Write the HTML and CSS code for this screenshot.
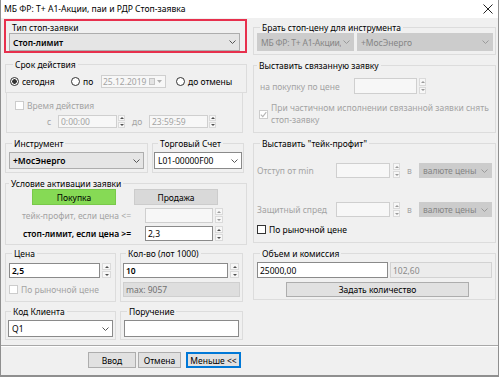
FILE: index.html
```html
<!DOCTYPE html>
<html>
<head>
<meta charset="utf-8">
<link rel="stylesheet" href="styles.css">
</head>
<body>
<div class="window">
  <div class="titlebar">
    <span class="title">МБ ФР: Т+ А1-Акции, паи и РДР Стоп-заявка</span>
    <svg class="close" width="10" height="10" viewBox="0 0 10 10"><path d="M0.5 0.5 L9.5 9.5 M9.5 0.5 L0.5 9.5" stroke="#222" stroke-width="1" fill="none"/></svg>
  </div>
  <div class="content">
    <div class="col left">
      <div class="highlight">
        <div class="hl-label">Тип стоп-заявки</div>
        <div class="combo grey hl-combo"><span class="bold">Стоп-лимит</span><svg class="arrow" width="7" height="4" viewBox="0 0 7 4"><path d="M0.5 0.5 L3.5 3.5 L6.5 0.5" stroke="#555" fill="none"/></svg></div>
      </div>

      <div class="group srok">
        <div class="legend">Срок действия</div>
        <div class="radio-row">
          <span class="opt opt1"><span class="radio on"></span><span class="rtext">сегодня</span></span>
          <span class="opt opt2"><span class="radio"></span><span class="rtext">по</span></span>
          <span class="date"><span class="dis-text">25.12.2019</span><span class="date-icons"><span class="cal"></span><svg width="5" height="3" viewBox="0 0 5 3"><path d="M0 0 L2.5 3 L5 0Z" fill="#b0b0b0"/></svg></span></span>
          <span class="opt opt3"><span class="radio"></span><span class="rtext">до отмены</span></span>
        </div>
      </div>

      <div class="timebox">
        <div class="chk-row"><span class="chk dis"></span><span class="dis-text ctext">Время действия</span></div>
        <div class="time-row">
          <span class="dis-text t-s">с</span>
          <span class="field dis t-in"><span class="dis-text">0:00:00</span></span>
          <span class="spin s7"><span class="sb up"></span><span class="sb down"></span></span>
          <span class="dis-text t-do">до</span>
          <span class="field dis t-in"><span class="dis-text">23:59:59</span></span>
          <span class="spin s7"><span class="sb up"></span><span class="sb down"></span></span>
        </div>
      </div>

      <div class="row2 r-instr">
        <div class="group g-instr">
          <div class="legend">Инструмент</div>
          <div class="combo grey c-instr"><span class="bold">+МосЭнерго</span><svg class="arrow" width="7" height="4" viewBox="0 0 7 4"><path d="M0.5 0.5 L3.5 3.5 L6.5 0.5" stroke="#555" fill="none"/></svg></div>
        </div>
        <div class="group g-acct">
          <div class="legend">Торговый Счет</div>
          <div class="combo white c-acct"><span>L01-00000F00</span><svg class="arrow" width="7" height="4" viewBox="0 0 7 4"><path d="M0.5 0.5 L3.5 3.5 L6.5 0.5" stroke="#555" fill="none"/></svg></div>
        </div>
      </div>

      <div class="group g-cond">
        <div class="legend">Условие активации заявки</div>
        <div class="btn-row">
          <span class="sbtn buy">Покупка</span>
          <span class="sbtn sell">Продажа</span>
        </div>
        <div class="cond-row">
          <span class="cond-label dis-text">тейк-профит, если цена &lt;=</span>
          <span class="field dis c-in"></span>
          <span class="spin s8 dspin"><span class="sb up"></span><span class="sb down"></span></span>
        </div>
        <div class="cond-row">
          <span class="cond-label bold">стоп-лимит, если цена &gt;=</span>
          <span class="field white c-in"><span>2,3</span></span>
          <span class="spin s8"><span class="sb up"></span><span class="sb down"></span></span>
        </div>
      </div>

      <div class="row2 r-price">
        <div class="group g-price">
          <div class="legend">Цена</div>
          <div class="in-row">
            <span class="field white p-in"><span class="bold">2,5</span></span>
            <span class="spin s9"><span class="sb up"></span><span class="sb down"></span></span>
          </div>
          <div class="chk-row p-chk"><span class="chk dis"></span><span class="dis-text ctext">По рыночной цене</span></div>
        </div>
        <div class="group g-qty">
          <div class="legend">Кол-во (лот 1000)</div>
          <div class="in-row">
            <span class="field white q-in"><span class="bold">10</span></span>
            <span class="spin s9"><span class="sb up"></span><span class="sb down"></span></span>
          </div>
          <div class="field ro q-max"><span>max: 9057</span></div>
        </div>
      </div>

      <div class="row2 r-client">
        <div class="group g-client">
          <div class="legend">Код Клиента</div>
          <div class="combo white c-client"><span>Q1</span><svg class="arrow" width="7" height="4" viewBox="0 0 7 4"><path d="M0.5 0.5 L3.5 3.5 L6.5 0.5" stroke="#555" fill="none"/></svg></div>
        </div>
        <div class="group g-order">
          <div class="legend">Поручение</div>
          <div class="field white o-in"></div>
        </div>
      </div>
    </div>

    <div class="col right">
      <div class="group g-take">
        <div class="legend">Брать стоп-цену для инструмента</div>
        <div class="take-row">
          <div class="combo disc t1"><span class="ctxt">МБ ФР: Т+ А1-Акции,</span><svg class="arrow" width="7" height="4" viewBox="0 0 7 4"><path d="M0.5 0.5 L3.5 3.5 L6.5 0.5" stroke="#9a9a9a" fill="none"/></svg></div>
          <div class="combo disc t2"><span class="ctxt">+МосЭнерго</span><svg class="arrow" width="7" height="4" viewBox="0 0 7 4"><path d="M0.5 0.5 L3.5 3.5 L6.5 0.5" stroke="#9a9a9a" fill="none"/></svg></div>
        </div>
      </div>

      <div class="group g-link">
        <div class="legend">Выставить связанную заявку</div>
        <div class="link-row">
          <span class="dis-text link-label">на покупку по цене</span>
          <span class="field dis l-in"></span>
          <span class="spin s7 l-spin dspin"><span class="sb up"></span><span class="sb down"></span></span>
        </div>
        <div class="link-chk">
          <span class="chk dis checked"><svg width="7" height="7" viewBox="0 0 7 7"><path d="M0.8 3.6 L2.8 5.6 L6.3 1.2" stroke="#b5b5b5" stroke-width="1.1" fill="none"/></svg></span>
          <span class="dis-text link-text">При частичном исполнении связанной заявки снять<br>стоп-заявку</span>
        </div>
      </div>

      <div class="group g-tp">
        <div class="legend">Выставить "тейк-профит"</div>
        <div class="tp-row tp1">
          <span class="dis-text tp-label">Отступ от min</span>
          <span class="field dis tp-in"></span>
          <span class="spin s7 tp-spin dspin"><span class="sb up"></span><span class="sb down"></span></span>
          <span class="dis-text tp-v">в</span>
          <div class="combo disc tp-c"><span class="ctxt">валюте цены</span><svg class="arrow" width="7" height="4" viewBox="0 0 7 4"><path d="M0.5 0.5 L3.5 3.5 L6.5 0.5" stroke="#9a9a9a" fill="none"/></svg></div>
        </div>
        <div class="tp-row tp2">
          <span class="dis-text tp-label">Защитный спред</span>
          <span class="field dis tp-in"></span>
          <span class="spin s7 tp-spin dspin"><span class="sb up"></span><span class="sb down"></span></span>
          <span class="dis-text tp-v">в</span>
          <div class="combo disc tp-c"><span class="ctxt">валюте цены</span><svg class="arrow" width="7" height="4" viewBox="0 0 7 4"><path d="M0.5 0.5 L3.5 3.5 L6.5 0.5" stroke="#9a9a9a" fill="none"/></svg></div>
        </div>
        <div class="chk-row tp-chk"><span class="chk"></span><span class="ctext">По рыночной цене</span></div>
      </div>

      <div class="group g-vol">
        <div class="legend">Объем и комиссия</div>
        <div class="vol-row">
          <span class="field white v-in"><span>25000,00</span></span>
          <span class="field ro2 v-fee"><span>102,60</span></span>
        </div>
        <div class="btn v-btn">Задать количество</div>
      </div>
    </div>
  </div>
  <div class="footer">
    <div class="btn f1">Ввод</div>
    <div class="btn f2">Отмена</div>
    <div class="btn f3 focus">Меньше &lt;&lt;</div>
  </div>
</div>
</body>
</html>
```
FILE: styles.css
```css
* { box-sizing: border-box; }
html, body { margin: 0; padding: 0; }
body {
  font-family: "Noto Sans", "Open Sans", sans-serif;
  font-size: 8.5px;
  line-height: 11px;
  color: #000;
  background: #fff;
  width: 500px;
  height: 377px;
  overflow: hidden;
}
.bold { font-weight: 600; }
.dis-text { color: #a3a3a3; }

.window {
  width: 499px;
  height: 377px;
  background: #f0f0f0;
  border-left: 1px solid #8f8f8f;
  border-right: 1px solid #8f8f8f;
  border-bottom: 2px solid #8f8f8f;
  display: flex;
  flex-direction: column;
}
.titlebar {
  height: 18px;
  flex: none;
  background: #fff;
  display: flex;
  align-items: center;
  justify-content: space-between;
  padding: 0 5px 0 3px;
}
.title { font-size: 8.6px; }
.content {
  flex: 1;
  display: flex;
  padding-left: 3px;
}
.col { display: flex; flex-direction: column; width: 243px; }
.col.right { margin-left: 6px; }

/* generic group box */
.group { border: 1px solid #dcdcdc; }
.legend {
  width: max-content;
  height: 11px;
  line-height: 11px;
  margin: -6px 0 0 3px;
  padding: 0 2px;
  background: #f0f0f0;
}

/* controls */
.combo {
  display: flex;
  align-items: center;
  justify-content: space-between;
  padding: 0 3px 0 3px;
  border: 1px solid #adadad;
  white-space: nowrap;
  overflow: hidden;
}
.ctxt { overflow: hidden; min-width: 0; flex: 0 1 auto; }
.combo.grey { background: #e5e5e5; border-color: #adadad; }
.combo.white { background: #fff; border-color: #8a8a8a; }
.combo.disc { background: #cccccc; border-color: #cccccc; color: #858585; }
.arrow { flex: none; margin-left: 2px; }

.field {
  display: flex;
  align-items: center;
  padding: 0 2px;
  border: 1px solid #8a8a8a;
  background: #fff;
  white-space: nowrap;
}
.field.white { background: #fff; border-color: #8a8a8a; }
.field.dis { background: #f7f7f7; border-color: #cfcfcf; }
.field.ro { background: #dedede; border-color: #cfcfcf; color: #707070; }
.field.ro2 { background: #ececec; border-color: #d2d2d2; color: #8a8a8a; }

.spin { display: flex; flex-direction: column; justify-content: space-between; flex: none; }
.sb {
  flex: 1;
  display: flex;
  align-items: center;
  justify-content: center;
  background: #f7f7f7;
  border: 1px solid #dadada;
}
.sb + .sb { margin-top: 1px; }
.sb::after {
  content: "";
  width: 0;
  height: 0;
  border-left: 2px solid transparent;
  border-right: 2px solid transparent;
}
.sb.up::after { border-bottom: 2px solid #505050; }
.sb.down::after { border-top: 2px solid #505050; }
.dspin .sb.up::after { border-bottom-color: #9a9a9a; }
.dspin .sb.down::after { border-top-color: #9a9a9a; }
.s7 { width: 7px; }
.s8 { width: 8px; }
.s9 { width: 9px; }

.radio {
  width: 9px;
  height: 9px;
  border-radius: 50%;
  border: 1px solid #333;
  background: #fff;
  flex: none;
}
.radio.on { background: radial-gradient(circle, #333 0 2px, #fff 2.6px); }
.chk {
  width: 9px;
  height: 9px;
  border: 1px solid #333;
  background: #fff;
  flex: none;
  display: flex;
  align-items: center;
  justify-content: center;
}
.chk.dis { border-color: #cccccc; }
.chk-row { display: flex; align-items: center; height: 11px; }
.ctext { margin-left: 3px; }

.btn {
  display: flex;
  align-items: center;
  justify-content: center;
  height: 16px;
  border: 1px solid #adadad;
  background: #e1e1e1;
}
.btn.focus { border-color: #0078d7; box-shadow: inset 0 0 0 1px #0078d7; }

/* highlight */
.highlight {
  margin-top: 1px;
  height: 34px;
  border: 2px solid #e7304d;
  padding: 1px 5px 0 3px;
}
.hl-label { margin-left: 3px; height: 11px; }
.hl-combo { height: 18px; }

/* srok */
.srok { margin: 11px 0 0 1px; width: 242px; padding: 0 0 4px 4px; }
.radio-row { display: flex; align-items: center; height: 14px; margin-top: 4px; }
.opt { display: flex; align-items: center; }
.rtext { margin-left: 3px; }
.opt1 { width: 61px; }
.opt2 { width: 30px; }
.date {
  width: 65px;
  height: 13px;
  display: flex;
  align-items: center;
  justify-content: space-between;
  border: 1px solid #cfcfcf;
  background: #f7f7f7;
  padding: 0 3px 0 1px;
}
.date-icons { display: flex; align-items: center; gap: 2px; }
.cal { width: 6px; height: 7px; border: 1px solid #c4c4c4; background: #e4e4e4; }
.opt3 { margin-left: 10px; }

/* time */
.timebox {
  margin: -1px 4px 0 2px;
  border: 1px solid #dcdcdc;
  padding: 7px 0 4px 8px;
}
.time-row { display: flex; align-items: center; height: 13px; margin-top: 4px; }
.t-s { margin-left: 32px; width: 11px; }
.t-in { width: 59px; height: 13px; }
.time-row .spin { height: 13px; margin-left: 1px; }
.t-do { margin-left: 7px; width: 17px; }

/* row of two groups */
.row2 { display: flex; align-items: flex-start; }
.r-instr { margin-top: 10px; }
.g-instr { margin-left: 1px; width: 143px; padding: 0 3px 3px 3px; }
.g-acct { margin-left: 4px; width: 92px; padding: 0 1px 3px 1px; }
.g-acct .legend { margin-left: 4px; }
.c-instr, .c-acct { height: 17px; margin-top: 3px; }

/* condition */
.g-cond { margin: 10px 0 0 1px; width: 242px; padding: 0 0 3px 0; }
.btn-row { display: flex; height: 16px; padding-left: 26px; }
.sbtn {
  width: 84px;
  height: 16px;
  display: flex;
  align-items: center;
  justify-content: center;
}
.sbtn.buy { background: #86da55; border: 1px solid #79c94a; }
.sbtn.sell { background: #d9d9d9; border: 1px solid #cccccc; margin-left: 18px; }
.cond-row { display: flex; align-items: center; height: 15px; margin-top: 3px; }
.cond-label { width: 125px; text-align: right; }
.c-in { width: 68px; height: 15px; margin-left: 14px; }
.cond-row .spin { height: 15px; margin-left: 2px; }

/* price / qty */
.r-price { margin-top: 8px; }
.g-price { margin-left: 1px; width: 111px; padding: 0 3px 4px 3px; }
.g-qty { margin-left: 4px; width: 123px; padding: 0 2px 4px 2px; }
.in-row { display: flex; height: 15px; margin-top: 4px; }
.in-row .spin { height: 15px; margin-left: 2px; }
.p-in { width: 91px; height: 15px; }
.q-in { width: 105px; height: 15px; }
.p-chk { margin-top: 6px; margin-bottom: 2px; padding-left: 0; }
.q-max { margin-top: 4px; width: 117px; height: 15px; }

/* client */
.r-client { margin-top: 9px; }
.g-client { margin-left: 1px; width: 111px; padding: 0 2px 2px 2px; }
.g-order { margin-left: 4px; width: 123px; padding: 0 3px 2px 3px; }
.c-client, .o-in { height: 17px; margin-top: 3px; }

/* right column */
.g-take { margin-top: 9px; padding: 0 2px 3px 3px; }
.take-row { display: flex; height: 18px; }
.t1 { width: 97px; height: 18px; letter-spacing: -0.2px; }
.t2 { width: 136px; height: 18px; margin-left: 3px; }

.g-link { margin-top: 10px; padding: 0 0 6px 0; }
.link-row { display: flex; align-items: center; height: 16px; margin-top: 7px; padding-left: 6px; }
.link-label { width: 94px; }
.l-in { width: 63px; height: 16px; }
.l-spin { height: 16px; margin-left: 2px; }
.link-chk { display: flex; align-items: center; margin-top: 8px; padding-left: 5px; height: 24px; }
.link-text { margin-left: 3px; line-height: 12px; }

.g-tp { margin-top: 10px; padding: 0 0 7px 3px; }
.tp-row { display: flex; align-items: center; height: 15px; }
.tp1 { margin-top: 14px; }
.tp2 { margin-top: 24px; }
.tp-label { width: 79px; }
.tp-in { width: 54px; height: 15px; }
.tp-spin { height: 15px; margin-left: 3px; }
.tp-v { margin-left: 7px; width: 12px; }
.tp-c { width: 73px; height: 15px; }
.tp-chk { margin-top: 7px; }

.g-vol { margin-top: 10px; padding: 0 0 2px 3px; }
.vol-row { display: flex; height: 16px; margin-top: 3px; }
.v-in { width: 131px; height: 16px; }
.v-fee { width: 102px; height: 16px; margin-left: 2px; }
.v-btn { margin: 4px 0 0 29px; width: 183px; height: 15px; background: #e1e1e1; border-color: #adadad; }

/* footer */
.footer {
  flex: none;
  height: 30px;
  border-top: 1px solid #a8a8a8;
  box-shadow: inset 0 1px 0 #ffffff;
  display: flex;
  align-items: flex-start;
  padding: 6px 0 0 87px;
}
.f1 { width: 48px; }
.f2 { width: 43px; margin-left: 2px; }
.f3 { width: 55px; margin-left: 5px; }
```
